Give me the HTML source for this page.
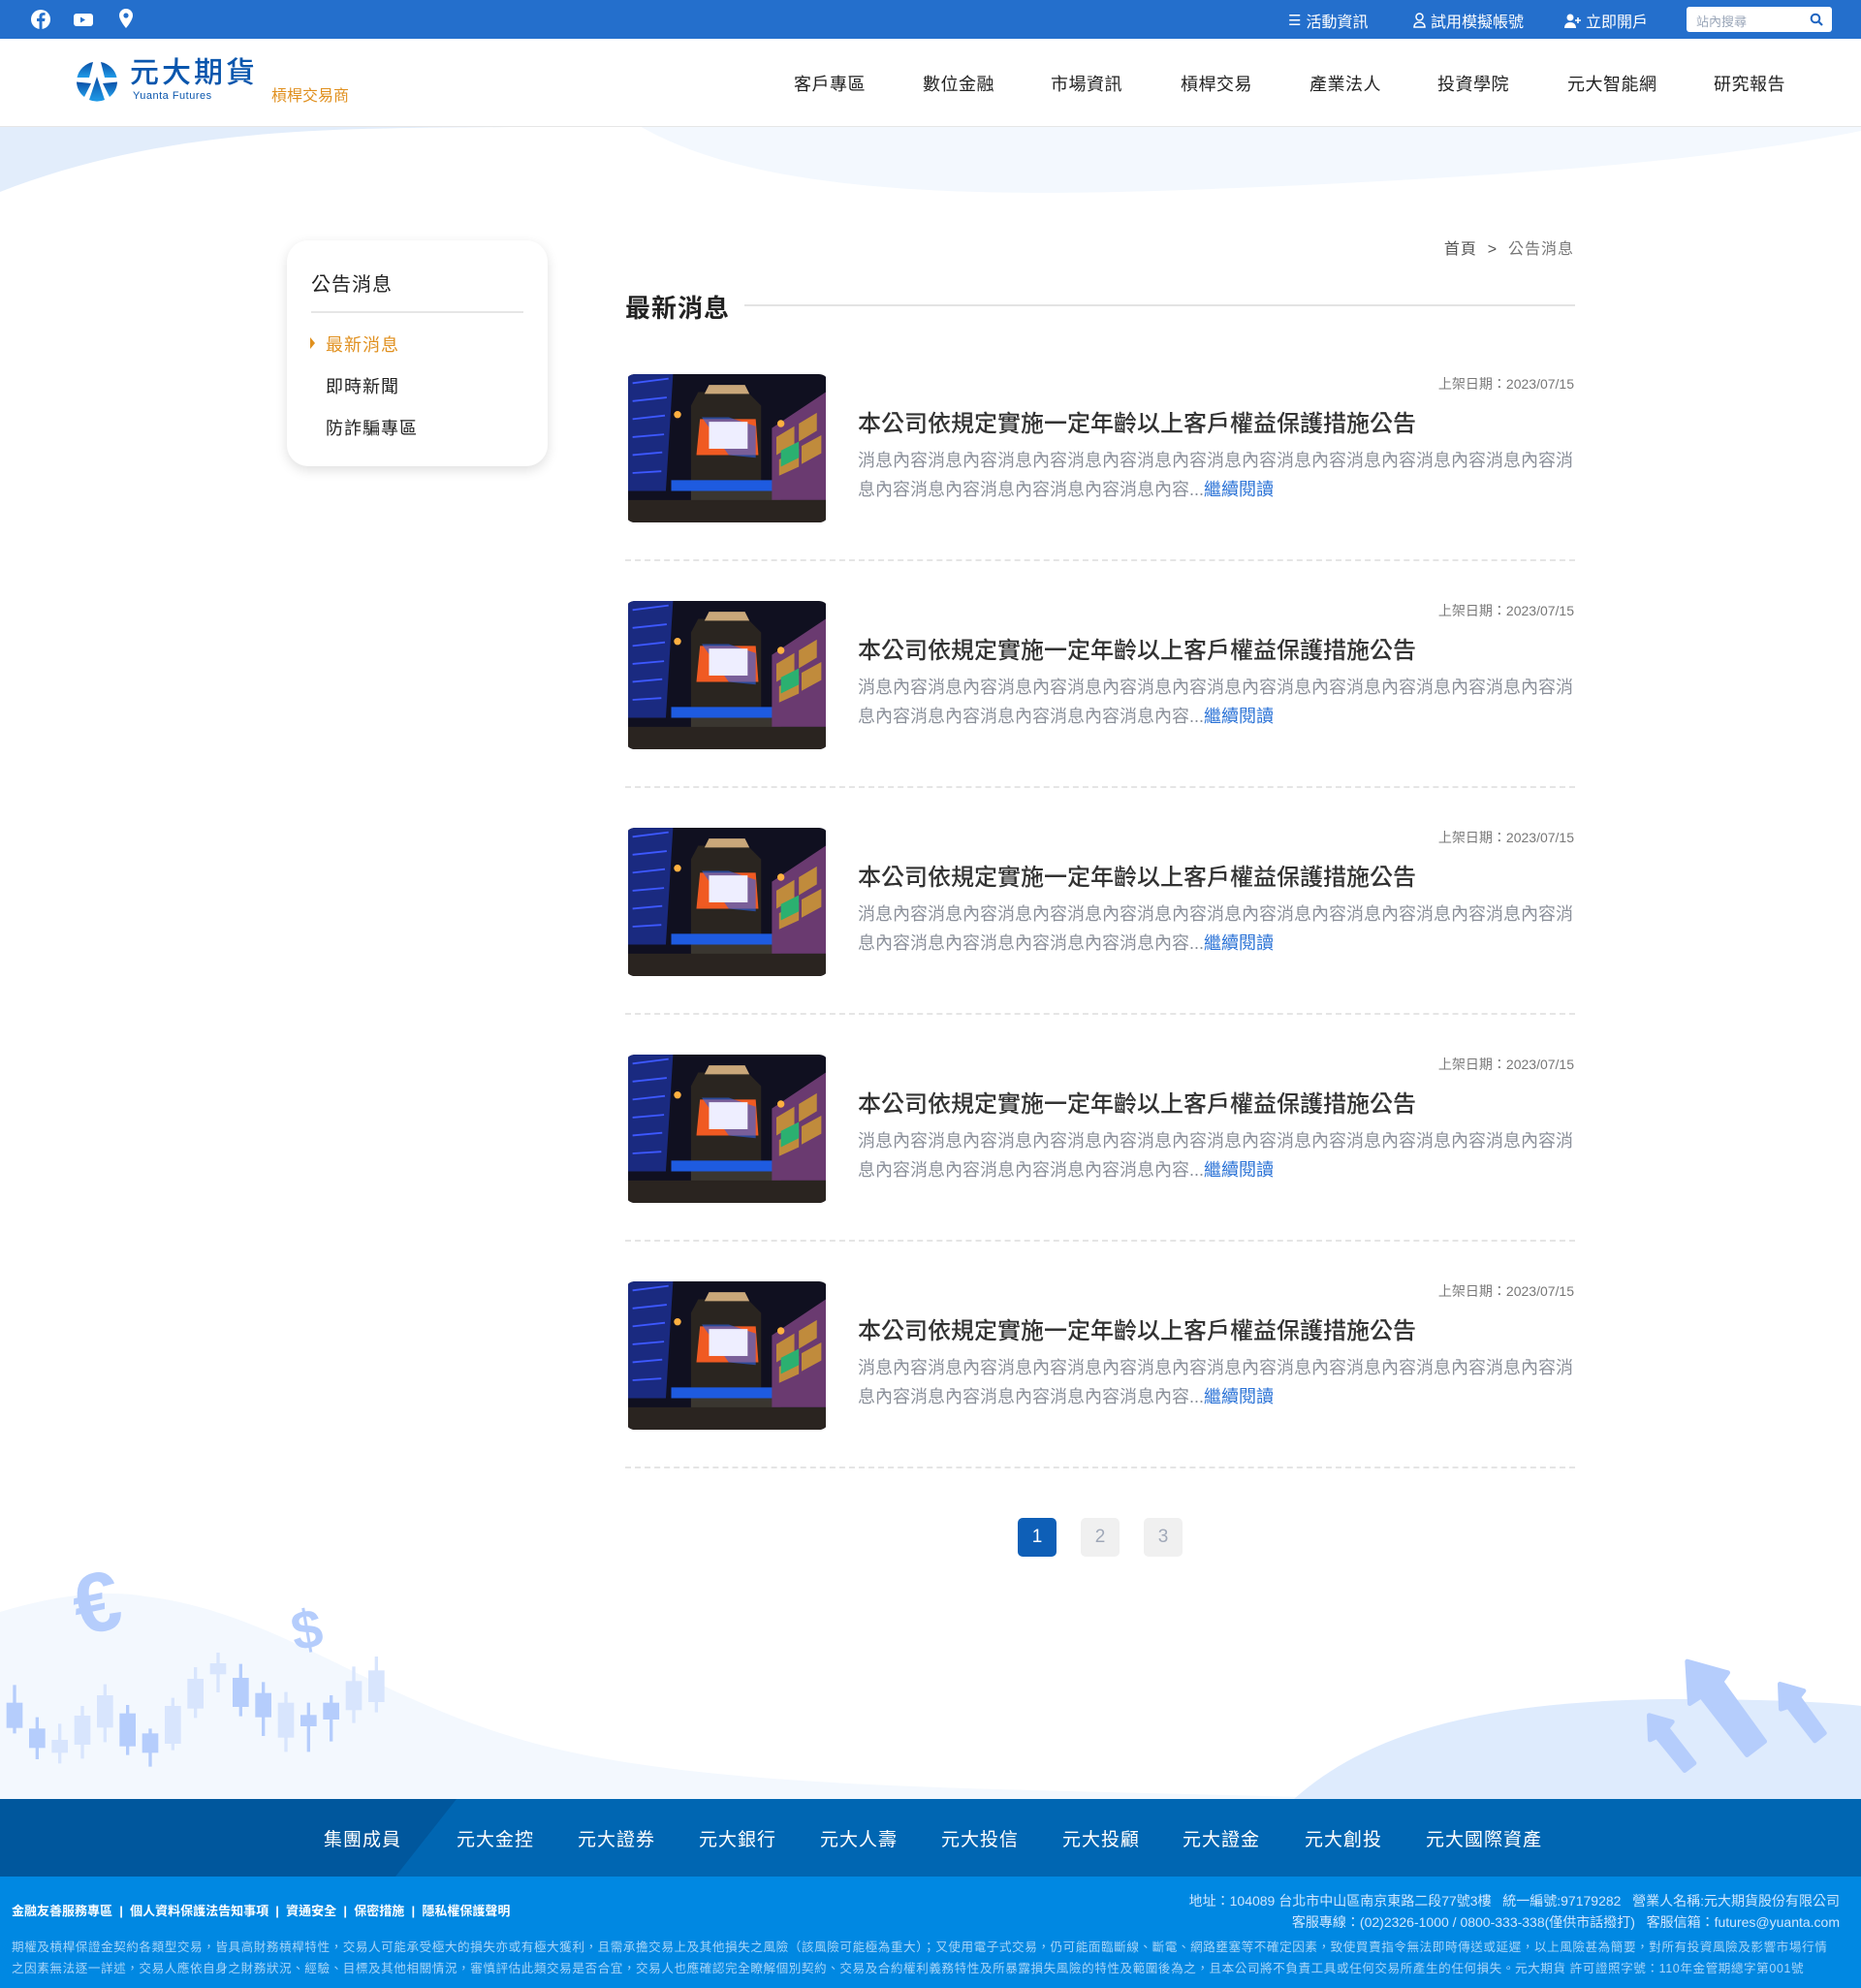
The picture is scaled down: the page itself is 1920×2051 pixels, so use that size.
<!DOCTYPE html>
<html lang="zh-Hant"><head><meta charset="utf-8">
<style>
*{margin:0;padding:0;box-sizing:border-box}
body{width:1920px;height:2051px;position:relative;overflow:hidden;background:#fff;font-family:"Liberation Sans","Noto Sans CJK TC",sans-serif;color:#333}
.abs{position:absolute}
.top{left:0;top:0;width:1920px;height:40px;background:#246fcc}
.tl{color:#fff;font-size:16px;top:9px;white-space:nowrap;display:flex;align-items:center;gap:5px}
.search{left:1740px;top:7px;width:150px;height:26px;background:#fff;border-radius:3px;font-size:13px;color:#9aa6b8;padding:5px 10px}
.nav{top:73px;font-size:18px;color:#222;white-space:nowrap;letter-spacing:.5px}
.card{left:296px;top:248px;width:269px;height:233px;border-radius:22px;background:#fff;box-shadow:0 4px 12px rgba(0,0,0,.13)}
.side{font-size:18px;white-space:nowrap;letter-spacing:1px}
.row{left:0;width:1920px;height:200px}
.item-t{font-size:24px;color:#333;white-space:nowrap;font-weight:500}
.item-d{font-size:18px;color:#8a8f99;width:742px;line-height:30px;letter-spacing:0}
.item-d a{color:#2a72d6;text-decoration:none}
.date{font-size:14px;color:#777;right:296px;white-space:nowrap}
.dash{left:645px;width:980px;border-top:2px dashed #e5e5e5}
.pg{top:1566px;width:40px;height:40px;border-radius:5px;font-size:19px;text-align:center;line-height:40px}
.fn{top:1883px;font-size:19px;color:#fff;white-space:nowrap;letter-spacing:1px}
</style></head><body>

<svg class="abs" style="left:0;top:130px" width="1920" height="90" viewBox="0 0 1920 90">
<path d="M660 0 C780 70 1000 75 1250 65 C1500 55 1750 40 1920 5 L1920 0Z" fill="#f3f8fe"/>
<path d="M0 0 L580 0 C400 5 200 -10 0 68Z" fill="#e2edfb"/>
</svg>

<div class="abs top"></div>
<svg class="abs" style="left:30px;top:8px" width="115" height="26" viewBox="0 0 115 26">
<circle cx="12" cy="12" r="10" fill="#fff"/><path d="M13.5 22V14h2.6l.4-3h-3V9.2c0-.9.3-1.4 1.5-1.4h1.6V5.2c-.3 0-1.2-.1-2.3-.1-2.3 0-3.8 1.4-3.8 3.9V11H8v3h2.5v8z" fill="#246fcc"/>
<rect x="46" y="6" width="20" height="13" rx="3" fill="#fff"/><path d="M53 9.5v6l5-3z" fill="#246fcc"/>
<path d="M100 1a7 7 0 0 0-7 7c0 5 7 13 7 13s7-8 7-13a7 7 0 0 0-7-7z" fill="#fff"/><circle cx="100" cy="8" r="2.6" fill="#246fcc"/>
</svg>
<div class="abs tl" style="left:1329px"><span style="font-size:15px">☰</span>活動資訊</div>
<div class="abs tl" style="left:1458px"><svg width="13" height="16" viewBox="0 0 13 16"><circle cx="6.5" cy="4.5" r="3.5" fill="none" stroke="#fff" stroke-width="1.5"/><path d="M1 15c0-3.5 2.5-5 5.5-5s5.5 1.5 5.5 5z" fill="none" stroke="#fff" stroke-width="1.5"/></svg>試用模擬帳號</div>
<div class="abs tl" style="left:1614px"><svg width="17" height="15" viewBox="0 0 17 15"><circle cx="6" cy="4" r="3.5" fill="#fff"/><path d="M0 15c0-4 2.5-6 6-6s6 2 6 6z" fill="#fff"/><path d="M14 4v6M11 7h6" stroke="#fff" stroke-width="1.6"/></svg>立即開戶</div>
<div class="abs search">站內搜尋<svg style="position:absolute;right:9px;top:6px" width="14" height="14" viewBox="0 0 14 14"><circle cx="6" cy="6" r="4.3" fill="none" stroke="#1e64c0" stroke-width="2"/><path d="M9 9l4 4" stroke="#1e64c0" stroke-width="2.2"/></svg></div>

<div class="abs" style="left:0;top:130px;width:1920px;height:1px;background:#e6e6e6"></div>
<svg class="abs" style="left:78px;top:63px" width="44" height="42" viewBox="0 0 44 42">
<defs><linearGradient id="lg" x1="0" y1="0" x2="0" y2="1"><stop offset="0" stop-color="#0b4fa6"/><stop offset="1" stop-color="#1f9be8"/></linearGradient></defs>
<path d="M18 1A21 21 0 0 0 1.5 17H14z" fill="url(#lg)"/><path d="M26 1A21 21 0 0 1 42.5 17H30z" fill="url(#lg)"/>
<path d="M1 21.5A21 21 0 0 0 9 37l7-14z" fill="url(#lg)"/><path d="M43 21.5A21 21 0 0 1 35 37l-7-14z" fill="url(#lg)"/>
<path d="M22 16l-8 24a21 21 0 0 0 16 0z" fill="url(#lg)"/>
</svg>
<div class="abs" style="left:134px;top:61px;font-size:30px;line-height:1;color:#0a56ad;letter-spacing:3px;font-weight:500;white-space:nowrap">元大期貨</div>
<div class="abs" style="left:137px;top:94px;font-size:11px;line-height:1;color:#0a56ad;white-space:nowrap;letter-spacing:.5px">Yuanta Futures</div>
<div class="abs" style="left:280px;top:85px;font-size:16px;color:#e0901f;white-space:nowrap">槓桿交易商</div>

<div class="abs nav" style="left:819px">客戶專區</div>
<div class="abs nav" style="left:952px">數位金融</div>
<div class="abs nav" style="left:1084px">市場資訊</div>
<div class="abs nav" style="left:1218px">槓桿交易</div>
<div class="abs nav" style="left:1351px">產業法人</div>
<div class="abs nav" style="left:1483px">投資學院</div>
<div class="abs nav" style="left:1617px">元大智能網</div>
<div class="abs nav" style="left:1768px">研究報告</div>

<div class="abs card"></div>
<div class="abs side" style="left:321px;top:277px;font-size:20px;color:#222">公告消息</div>
<div class="abs" style="left:321px;top:321px;width:219px;height:2px;background:#e6e6e6"></div>
<div class="abs" style="left:320px;top:348px;width:0;height:0;border-left:5px solid #e0901f;border-top:6px solid transparent;border-bottom:6px solid transparent"></div>
<div class="abs side" style="left:336px;top:342px;color:#e0901f">最新消息</div>
<div class="abs side" style="left:336px;top:385px;color:#222">即時新聞</div>
<div class="abs side" style="left:336px;top:428px;color:#222">防詐騙專區</div>

<div class="abs" style="right:296px;top:243px;font-size:16px;color:#555;white-space:nowrap;letter-spacing:1px">首頁 &nbsp;&gt;&nbsp; <span style="color:#777">公告消息</span></div>
<div class="abs" style="left:645px;top:298px;font-size:26px;color:#222;font-weight:bold;white-space:nowrap;letter-spacing:1px">最新消息</div>
<div class="abs" style="left:768px;top:314px;width:857px;height:2px;background:#e3e3e3"></div>

<svg width="0" height="0" style="position:absolute">
<defs><symbol id="bld" viewBox="0 0 220 165">
<rect width="220" height="165" fill="#101020"/>
<path d="M0 0h50l-8 130H0z" fill="#1a2a80"/>
<path d="M5 10l40-5M5 30l38-4M5 50l36-4M5 70l35-3M5 90l33-3M5 110l32-2" stroke="#3d58ff" stroke-width="2"/>
<path d="M78 20h55l15 15v120H70V35z" fill="#2a2520"/>
<path d="M90 12h40l5 10H85z" fill="#c9a77a"/>
<path d="M80 50h62l3 40H76z" fill="#f05a22"/>
<path d="M82 48l30 0 30 10 0 35-30-3z" fill="#2b63ea" opacity=".6"/>
<rect x="90" y="53" width="43" height="30" fill="#eef"/>
<path d="M48 118h125v12H48z" fill="#1e5be0"/>
<path d="M70 130h100v30H70z" fill="#3a3630"/>
<path d="M160 60l60-40v120h-60z" fill="#6a3a70"/>
<path d="M165 70l20-12v20l-20 12zM190 55l20-12v20l-20 12zM168 95l22-12v20l-22 10zM193 80l22-12v20l-22 12z" fill="#d6a030" opacity=".8"/>
<path d="M170 85l20-10v18l-20 10z" fill="#2bb070"/>
<path d="M0 140h220v25H0z" fill="#2a2420"/>
<circle cx="55" cy="45" r="4" fill="#ffb040"/><circle cx="170" cy="55" r="4" fill="#ffb040"/>
</symbol></defs></svg>

<div class="abs row" style="top:386px">
<svg class="abs" style="left:645px;top:0;border-radius:10px" width="210" height="153"><use href="#bld"/></svg>
<div class="abs date" style="top:0">上架日期：2023/07/15</div>
<div class="abs item-t" style="left:885px;top:31px">本公司依規定實施一定年齡以上客戶權益保護措施公告</div>
<div class="abs item-d" style="left:885px;top:74px">消息內容消息內容消息內容消息內容消息內容消息內容消息內容消息內容消息內容消息內容消息內容消息內容消息內容消息內容消息內容...<a>繼續閱讀</a></div>
</div>
<div class="abs dash" style="top:577px"></div>

<div class="abs row" style="top:620px">
<svg class="abs" style="left:645px;top:0;border-radius:10px" width="210" height="153"><use href="#bld"/></svg>
<div class="abs date" style="top:0">上架日期：2023/07/15</div>
<div class="abs item-t" style="left:885px;top:31px">本公司依規定實施一定年齡以上客戶權益保護措施公告</div>
<div class="abs item-d" style="left:885px;top:74px">消息內容消息內容消息內容消息內容消息內容消息內容消息內容消息內容消息內容消息內容消息內容消息內容消息內容消息內容消息內容...<a>繼續閱讀</a></div>
</div>
<div class="abs dash" style="top:811px"></div>

<div class="abs row" style="top:854px">
<svg class="abs" style="left:645px;top:0;border-radius:10px" width="210" height="153"><use href="#bld"/></svg>
<div class="abs date" style="top:0">上架日期：2023/07/15</div>
<div class="abs item-t" style="left:885px;top:31px">本公司依規定實施一定年齡以上客戶權益保護措施公告</div>
<div class="abs item-d" style="left:885px;top:74px">消息內容消息內容消息內容消息內容消息內容消息內容消息內容消息內容消息內容消息內容消息內容消息內容消息內容消息內容消息內容...<a>繼續閱讀</a></div>
</div>
<div class="abs dash" style="top:1045px"></div>

<div class="abs row" style="top:1088px">
<svg class="abs" style="left:645px;top:0;border-radius:10px" width="210" height="153"><use href="#bld"/></svg>
<div class="abs date" style="top:0">上架日期：2023/07/15</div>
<div class="abs item-t" style="left:885px;top:31px">本公司依規定實施一定年齡以上客戶權益保護措施公告</div>
<div class="abs item-d" style="left:885px;top:74px">消息內容消息內容消息內容消息內容消息內容消息內容消息內容消息內容消息內容消息內容消息內容消息內容消息內容消息內容消息內容...<a>繼續閱讀</a></div>
</div>
<div class="abs dash" style="top:1279px"></div>

<div class="abs row" style="top:1322px">
<svg class="abs" style="left:645px;top:0;border-radius:10px" width="210" height="153"><use href="#bld"/></svg>
<div class="abs date" style="top:0">上架日期：2023/07/15</div>
<div class="abs item-t" style="left:885px;top:31px">本公司依規定實施一定年齡以上客戶權益保護措施公告</div>
<div class="abs item-d" style="left:885px;top:74px">消息內容消息內容消息內容消息內容消息內容消息內容消息內容消息內容消息內容消息內容消息內容消息內容消息內容消息內容消息內容...<a>繼續閱讀</a></div>
</div>
<div class="abs dash" style="top:1513px"></div>

<div class="abs pg" style="left:1050px;background:#0e5fb7;color:#fff">1</div>
<div class="abs pg" style="left:1115px;background:#f0f0f0;color:#a0a8b8">2</div>
<div class="abs pg" style="left:1180px;background:#f0f0f0;color:#a0a8b8">3</div>

<svg class="abs" style="left:0;top:1620px" width="1920" height="236" viewBox="0 0 1920 236">
<path d="M0 43 C60 25 110 20 150 27 C300 45 400 150 600 190 C800 230 1100 225 1400 236 L0 236Z" fill="#f3f8fe"/>
<path d="M1335 236 C1420 160 1550 135 1720 133 C1800 133 1880 135 1920 140 L1920 236Z" fill="#deebfd"/>
</svg>
<svg class="abs" style="left:0;top:1600px" width="420" height="260" viewBox="0 0 1260 780">
<text x="225" y="245" font-size="260" font-weight="bold" font-family="Liberation Sans" fill="#b5cdfc" transform="rotate(-12 320 150)">€</text>
<text x="900" y="300" font-size="170" font-weight="bold" font-family="Liberation Sans" fill="#b5cdfc" transform="rotate(-10 960 230)">$</text>
<g stroke-width="10">
<path d="M45 415V565M115 515V645M395 477V632M465 550V668M745 350V512M815 406V573M955 470V622M1025 447V590" stroke="#b5cdfc"/>
<path d="M185 535V658M255 480V643M325 413V592M535 455V617M605 360V517M675 315V438M885 437V622M1095 358V533M1165 327V500" stroke="#d8e5fd"/>
</g>
<g fill="#b5cdfc">
<rect x="20" y="470" width="50" height="78"/><rect x="90" y="550" width="50" height="60"/><rect x="370" y="503" width="50" height="102"/><rect x="440" y="565" width="50" height="60"/><rect x="720" y="393" width="50" height="90"/><rect x="790" y="440" width="50" height="75"/><rect x="930" y="508" width="50" height="35"/><rect x="1000" y="470" width="50" height="52"/>
</g>
<g fill="#d8e5fd">
<rect x="160" y="585" width="50" height="40"/><rect x="230" y="510" width="50" height="90"/><rect x="300" y="447" width="50" height="100"/><rect x="510" y="480" width="50" height="117"/><rect x="580" y="396" width="50" height="92"/><rect x="650" y="348" width="50" height="34"/><rect x="860" y="470" width="50" height="108"/><rect x="1070" y="403" width="50" height="90"/><rect x="1140" y="370" width="50" height="98"/>
</g>
</svg>
<svg class="abs" style="left:1680px;top:1690px" width="240" height="170" viewBox="0 0 720 510">
<g fill="#b5cdfc" stroke="#b5cdfc" stroke-width="14" stroke-linejoin="round">
<path d="M182 72L308 107L288 135L422 320L367 362L225 180L190 203Z"/>
<path d="M64 239L136 259L120 279L204 387L174 410L88 305L67 315Z"/>
<path d="M469 142L543 163L527 183L607 294L577 318L495 212L472 220Z"/>
</g>
</svg>

<div class="abs" style="left:0;top:1856px;width:1920px;height:80px;background:#0066b2"></div>
<svg class="abs" style="left:0;top:1856px" width="480" height="80"><path d="M0 0H471L408 80H0Z" fill="#00579d"/></svg>
<div class="abs fn" style="left:334px">集團成員</div>
<div class="abs fn" style="left:471px">元大金控</div>
<div class="abs fn" style="left:596px">元大證券</div>
<div class="abs fn" style="left:721px">元大銀行</div>
<div class="abs fn" style="left:846px">元大人壽</div>
<div class="abs fn" style="left:971px">元大投信</div>
<div class="abs fn" style="left:1096px">元大投顧</div>
<div class="abs fn" style="left:1220px">元大證金</div>
<div class="abs fn" style="left:1346px">元大創投</div>
<div class="abs fn" style="left:1471px">元大國際資產</div>

<div class="abs" style="left:0;top:1936px;width:1920px;height:115px;background:#0088e2"></div>
<div class="abs" style="left:12px;top:1961px;font-size:13px;color:#fff;font-weight:bold;white-space:nowrap">金融友善服務專區 &nbsp;|&nbsp; 個人資料保護法告知事項 &nbsp;|&nbsp; 資通安全 &nbsp;|&nbsp; 保密措施 &nbsp;|&nbsp; 隱私權保護聲明</div>
<div class="abs" style="right:22px;top:1950px;font-size:14px;color:#cfe7ff;white-space:nowrap;text-align:right;line-height:22px">地址：104089 台北市中山區南京東路二段77號3樓 &nbsp; 統一編號:97179282 &nbsp; 營業人名稱:元大期貨股份有限公司<br>客服專線：(02)2326-1000 / 0800-333-338(僅供市話撥打) &nbsp; 客服信箱：futures@yuanta.com</div>
<div class="abs" style="left:12px;top:1998px;font-size:12.6px;color:#a8d4f8;white-space:nowrap;line-height:22px;letter-spacing:.55px">期權及槓桿保證金契約各類型交易，皆具高財務槓桿特性，交易人可能承受極大的損失亦或有極大獲利，且需承擔交易上及其他損失之風險（該風險可能極為重大）；又使用電子式交易，仍可能面臨斷線、斷電、網路壅塞等不確定因素，致使買賣指令無法即時傳送或延遲，以上風險甚為簡要，對所有投資風險及影響市場行情<br>之因素無法逐一詳述，交易人應依自身之財務狀況、經驗、目標及其他相關情況，審慎評估此類交易是否合宜，交易人也應確認完全瞭解個別契約、交易及合約權利義務特性及所暴露損失風險的特性及範圍後為之，且本公司將不負責工具或任何交易所產生的任何損失。元大期貨 許可證照字號：110年金管期總字第001號</div>
</body></html>
